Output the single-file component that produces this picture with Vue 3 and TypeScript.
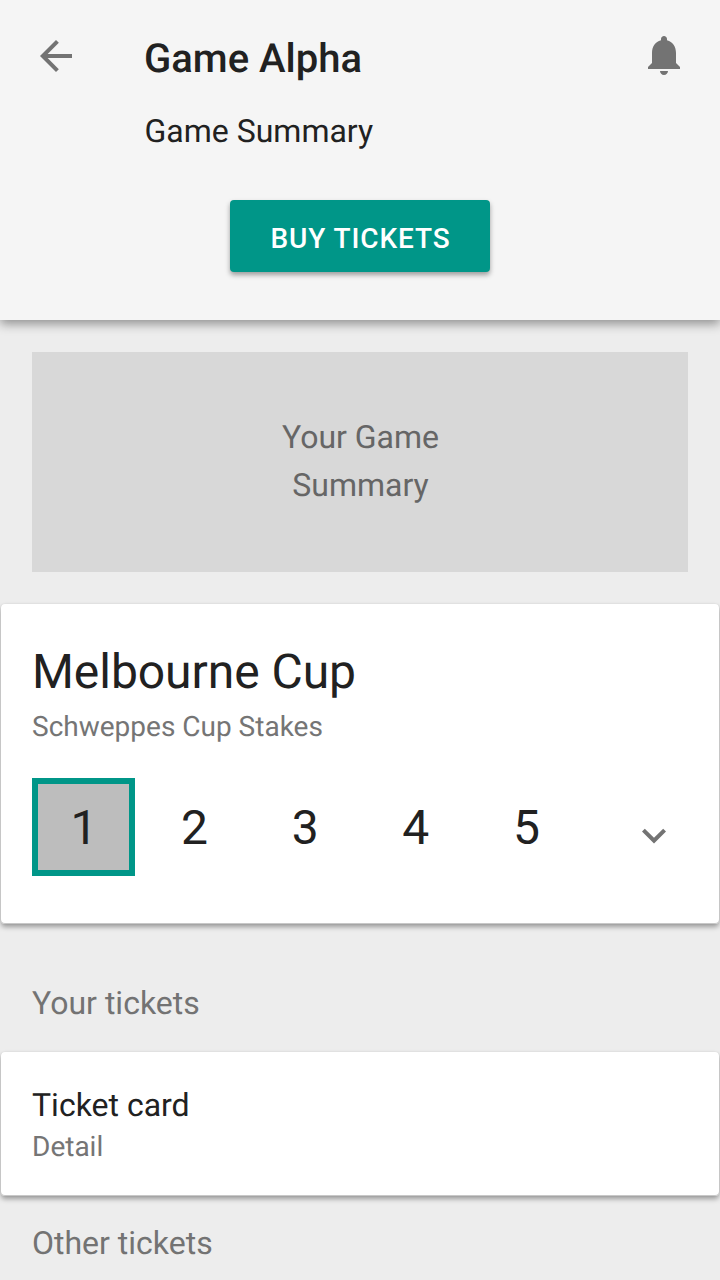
<script setup lang="ts">
import { ref } from 'vue'

const races = [1, 2, 3, 4, 5]
const selected = ref<number>(1)
</script>

<template>
  <main class="screen">
    <header class="header">
      <div class="toolbar">
        <button class="icon back" aria-label="Back">
          <svg viewBox="0 0 24 24" width="48" height="48"><path d="M20 11H7.83l5.59-5.59L12 4l-8 8 8 8 1.41-1.41L7.83 13H20v-2z" /></svg>
        </button>
        <h1>Game Alpha</h1>
        <button class="icon bell" aria-label="Notifications">
          <svg viewBox="0 0.5 24 24" width="48" height="48"><path d="M12 22c1.1 0 2-.9 2-2h-4c0 1.1.89 2 2 2zm6-6v-5c0-3.07-1.64-5.64-4.5-6.32V4c0-.83-.67-1.5-1.5-1.5s-1.5.67-1.5 1.5v.68C7.63 5.36 6 7.92 6 11v5l-2 2v1h16v-1l-2-2z" /></svg>
        </button>
      </div>
      <p class="subtitle">Game Summary</p>
      <button class="buy">BUY TICKETS</button>
    </header>

    <section class="summary">Your Game<br />Summary</section>

    <section class="card race-card">
      <h2>Melbourne Cup</h2>
      <p class="detail">Schweppes Cup Stakes</p>
      <div class="races">
        <button v-for="race in races" :key="race" class="race" :class="{ active: race === selected }" @click="selected = race">{{ race }}</button>
        <svg class="chevron" viewBox="0 0 24 24" width="48" height="48"><path d="M7.41 7.84L12 12.42l4.59-4.58L18 9.25l-6 6-6-6z" /></svg>
      </div>
    </section>

    <h3 class="section-title">Your tickets</h3>
    <section class="card ticket-card">
      <p class="ticket-title">Ticket card</p>
      <p class="detail">Detail</p>
    </section>
    <h3 class="section-title other">Other tickets</h3>
  </main>
</template>

<style>
body { margin: 0; background: #ededed; }
</style>

<style scoped>
* { box-sizing: border-box; }
h1, h2, h3, p { margin: 0; font-weight: 400; }
button { border: 0; padding: 0; background: none; font-family: inherit; color: inherit; }
svg { display: block; flex: none; fill: #737373; }
.screen { width: 720px; height: 1280px; overflow: hidden; background: #ededed; color: #212121; font-family: Roboto, sans-serif; text-rendering: geometricPrecision; }
.header { height: 320px; padding-top: 32px; background: #f5f5f5; box-shadow: 0 4px 10px rgba(0, 0, 0, .39); }
.toolbar { display: flex; height: 48px; padding: 0 32px; }
.toolbar h1 { flex: 1; margin-left: 64px; font-size: 40px; line-height: 54px; font-weight: 500; }
.subtitle { margin: 27px 0 0 144.5px; font-size: 32px; line-height: 48px; }
.buy { display: block; width: 260px; height: 72px; margin: 45px auto 0; padding: 4px 0 0 1px; border-radius: 4px; background: #009688; color: #fff; font-size: 28px; font-weight: 500; letter-spacing: .9px; box-shadow: 0 3px 5px rgba(0, 0, 0, .36); }
.summary { height: 220px; margin: 32px 32px; padding: 61px 0 0 1px; background: #d8d8d8; color: #666; text-align: center; font-size: 32px; line-height: 48px; }
.card { margin: 0 1px; border-radius: 4px; background: #fff; box-shadow: inset 0 -1px 0 #c8c8c8, 0 3px 5px rgba(0, 0, 0, .34), 0 0 2px rgba(0, 0, 0, .08); }
.race-card { height: 320px; padding: 38px 31px; }
h2 { font-size: 48px; line-height: 60px; letter-spacing: -.05px; }
.detail { color: #757575; font-size: 28px; line-height: 40px; }
.race-card .detail { margin-top: 5px; }
.races { display: flex; margin-top: 31px; gap: 7.6px; }
.race { flex: none; width: 103px; height: 98px; padding: 2px 0 0 1px; font-size: 48px; line-height: 96px; }
.race.active { border: 6px solid #009688; background: #bdbdbd; line-height: 84px; }
.chevron { margin: 35px 0 0 45px; }
.section-title { margin: 55px 32px 0; color: #737373; font-size: 32px; line-height: 48px; }
.ticket-card { height: 144px; margin-top: 25px; padding: 30px 31px; }
.ticket-title { font-size: 32px; line-height: 46px; }
.ticket-card .detail { line-height: 38px; }
.section-title.other { margin-top: 23px; }
</style>
